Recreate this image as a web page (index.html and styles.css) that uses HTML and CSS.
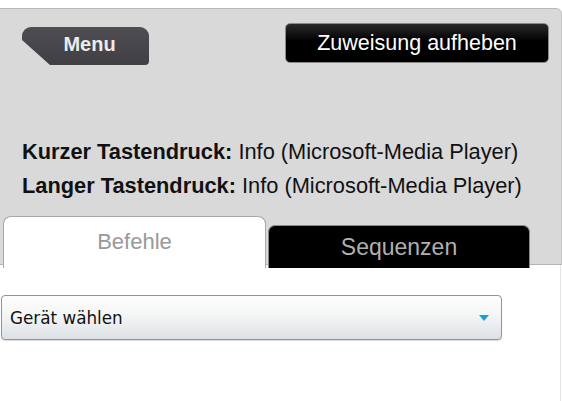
FILE: index.html
```html
<!DOCTYPE html>
<html lang="de">
<head>
<meta charset="utf-8">
<title>Taste</title>
<link rel="stylesheet" href="styles.css">
</head>
<body>
<div class="panel">
  <div class="header">
    <button class="menu-btn"><span>Menu</span></button>
    <button class="unassign-btn">Zuweisung aufheben</button>
  </div>
  <div class="info">
    <div class="info-line"><b>Kurzer Tastendruck:</b> Info (Microsoft-Media Player)</div>
    <div class="info-line"><b>Langer Tastendruck:</b> Info (Microsoft-Media Player)</div>
  </div>
  <div class="tabs">
    <div class="tab tab-active">Befehle</div>
    <div class="tab tab-inactive">Sequenzen</div>
  </div>
</div>
<div class="content">
  <div class="select">
    <span class="select-label">Gerät wählen</span>
    <svg class="select-arrow" width="10" height="6" viewBox="0 0 10 6"><polygon points="0,0 10,0 5,6" fill="#1a9fd6"/></svg>
  </div>
</div>
</body>
</html>
```
FILE: styles.css
```css
html, body {
  margin: 0;
  padding: 0;
  background: #ffffff;
  font-family: "Liberation Sans", Arial, sans-serif;
}

.panel {
  margin-top: 8px;
  background: #d9d9d9;
  border-top: 1px solid #b8b8b8;
  border-right: 1px solid #c4c4c4;
  border-bottom: 1px solid #b4b4b4;
  border-top-right-radius: 6px;
  display: flex;
  flex-direction: column;
  box-sizing: border-box;
  height: 257px;
}

.header {
  display: flex;
  justify-content: space-between;
  align-items: flex-start;
  padding: 14px 12px 0 22px;
}

.menu-btn {
  margin-top: 4px;
  width: 127px;
  height: 38px;
  border: none;
  padding: 0 0 4px 8px;
  background: linear-gradient(#4d4d52, #3f3f44);
  border-radius: 9px 9px 4px 0;
  clip-path: polygon(0 0, 100% 0, 100% 100%, 28px 100%, 0 13px);
  color: #ececec;
  font-family: "Liberation Sans", Arial, sans-serif;
  font-weight: 700;
  font-size: 20px;
  display: flex;
  align-items: center;
  justify-content: center;
}

.unassign-btn {
  width: 264px;
  height: 40px;
  border: 1px solid #8a8a8a;
  border-radius: 5px;
  background: linear-gradient(#2a2a2a, #000 45%, #000);
  color: #fff;
  font-family: "Liberation Sans", Arial, sans-serif;
  font-size: 21.5px;
  padding: 0;
}

.info {
  margin-top: 70px;
  padding-left: 22px;
  font-size: 21.8px;
  color: #111;
}

.info-line {
  line-height: 34px;
}

.info-line b {
  font-weight: 700;
}

.tabs {
  margin-top: auto;
  display: flex;
  align-items: flex-end;
  padding-left: 3px;
  margin-bottom: -4px;
  position: relative;
  z-index: 1;
}

.tab {
  box-sizing: border-box;
  text-align: center;
}

.tab-active {
  width: 263px;
  height: 52px;
  background: #fff;
  border: 1px solid #a8a8a8;
  border-bottom: none;
  border-radius: 8px 8px 0 0;
  color: #999;
  font-size: 22px;
  padding-top: 12px;
}

.tab-inactive {
  margin-left: 2px;
  width: 262px;
  height: 43px;
  background: #000;
  border: 1px solid #8a8a8a;
  border-bottom: none;
  border-radius: 7px 7px 0 0;
  color: #b0b0b0;
  font-size: 23px;
  padding-top: 8px;
}

.content {
  height: 136px;
  border-right: 1px solid #e4e4e4;
  width: 561px;
  padding-top: 30px;
  box-sizing: border-box;
}

.select {
  margin-left: 1px;
  width: 501px;
  height: 45px;
  box-sizing: border-box;
  border: 1px solid #8e949c;
  border-radius: 4px;
  background: linear-gradient(#fdfdfd, #f4f5f6 45%, #dde1e5);
  display: flex;
  align-items: center;
  justify-content: space-between;
  padding: 0 12px 0 8px;
  box-shadow: 0 1px 1px rgba(0,0,0,0.15);
}

.select-label {
  font-family: "DejaVu Sans", Verdana, sans-serif;
  font-size: 16.8px;
  color: #111;
}

.select-arrow {
  display: block;
}
```
